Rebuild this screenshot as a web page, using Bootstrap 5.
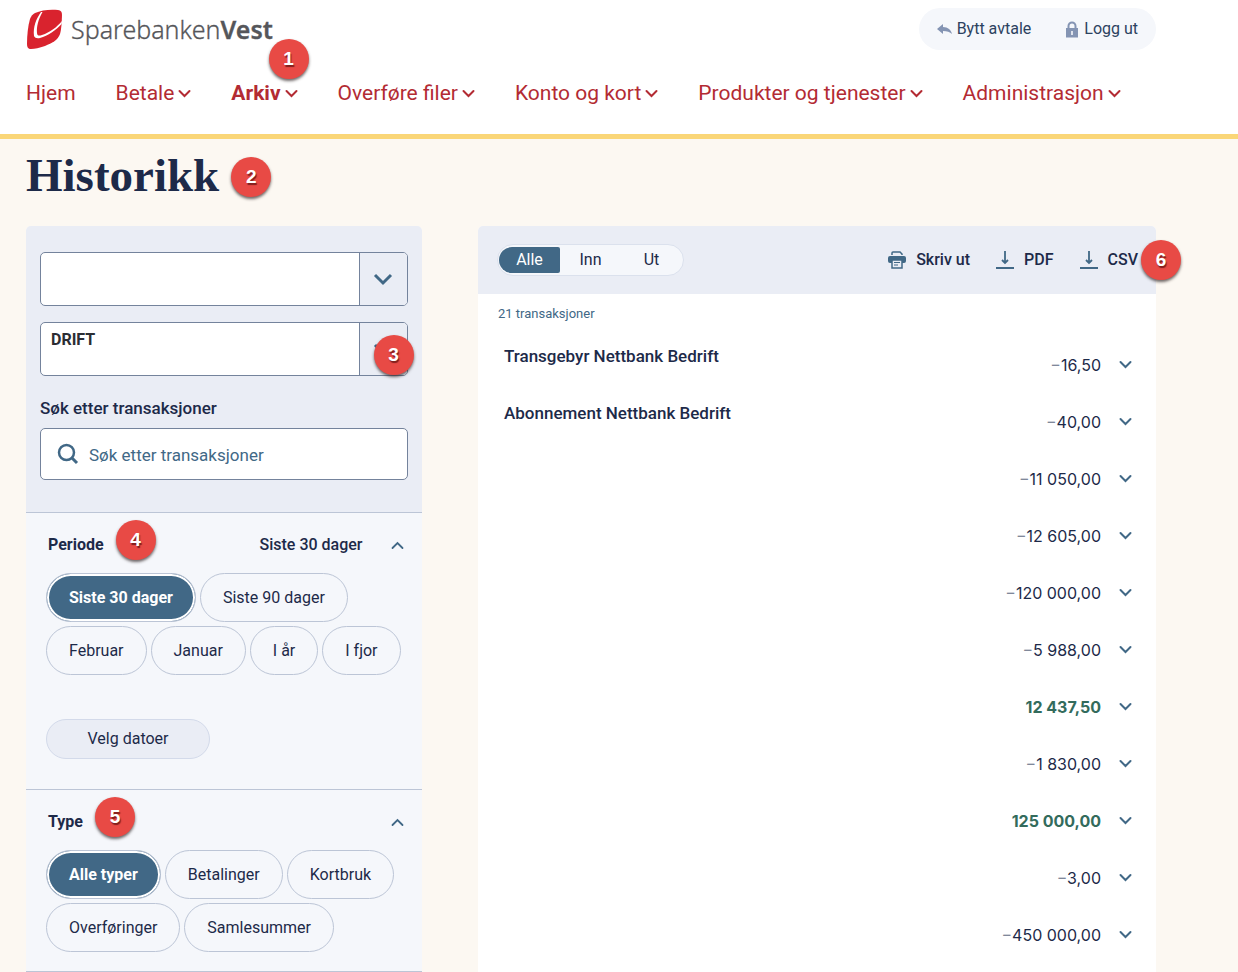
<!DOCTYPE html>
<html lang="no">
<head>
<meta charset="utf-8">
<meta name="viewport" content="width=device-width, initial-scale=1">
<title>Historikk – Sparebanken Vest</title>
<link rel="stylesheet" href="https://cdn.jsdelivr.net/npm/bootstrap@5.3.0/dist/css/bootstrap.min.css">
<style>
  :root { --ink:#1d2a49; --steel:#416886; --red:#b32b33; --pale:#eaedf5; --mist:#f5f7fb; --line:#bcc5d6; }
  body { font-family:Roboto,"Liberation Sans",sans-serif; font-size:16px; line-height:24px; color:var(--ink); background:#fcf8f2; }
  svg { display:block; flex:none; fill:none; stroke:currentColor; }
  svg.solid { stroke:none; }
  .page-wrap { padding-left:26px; padding-right:82px; }
  .site-header { border-bottom:5px solid #fad678; }
  .header-top { padding-top:8px; }
  .brand-text { font-family:"Noto Sans",sans-serif; font-size:25px; font-weight:300; line-height:32px; color:#55565a; -webkit-text-stroke:.3px #55565a; }
  .brand-text b { font-weight:600; }
  .user-links { height:42px; background:var(--mist); padding:0 18px; gap:34px; }
  .user-links a { color:#2c4260; gap:5px; }
  .user-links svg { color:#8494b3; }
  .main-nav { gap:40px; padding:28px 0 26px; font-size:21px; line-height:30px; }
  .main-nav a { color:var(--red); gap:4px; white-space:nowrap; }
  .main-nav .active { font-weight:700; }
  .step { position:absolute; width:40px; height:40px; border-radius:50%; background:#e84a45; color:#fff; z-index:2;
    font:700 19px/40px "Liberation Sans",sans-serif; text-align:center; text-shadow:1px 2px 1px rgba(60,0,0,.6); box-shadow:0 2px 3px rgba(50,40,40,.7); }
  .step-nav { right:-11px; top:-39px; }
  .step-title { left:calc(100% + 12px); top:10px; }
  .step-select { right:-6px; top:13px; }
  .step-head { left:calc(100% + 12px); top:-13px; }
  .step-export { left:calc(100% + 3px); top:-8px; }
  h1 { font:700 47px/56px "Liberation Serif",serif; margin:8px 0 23px; }
  .filters { width:35%; background:var(--mist); border-radius:5px 5px 0 0; }
  .results { width:60%; background:#fff; border-radius:5px 5px 0 0; }
  .filter-top { background:var(--pale); padding:26px 14px 32px; border-radius:5px 5px 0 0; }
  .pick { margin-bottom:16px; }
  .pick .form-select { height:54px; padding:5px 58px 23px 10px; border:1px solid #74839c; border-radius:5px; background-image:none; font-weight:700; font-size:16px; line-height:24px; color:#2b2d33; }
  .pick-arrow { position:absolute; right:1px; top:1px; bottom:1px; width:48px; background:var(--pale); border-left:1px solid #74839c; border-radius:0 4px 4px 0; color:var(--steel); pointer-events:none; display:grid; place-items:center; }
  .search-label { font-size:17px; font-weight:500; padding-top:4px; margin-bottom:8px; }
  .search-box { height:52px; border:1px solid #74839c; border-radius:5px; background:#fff; padding:0 16px; gap:10px; color:var(--steel); }
  .search-box input { min-width:0; font-size:17px; padding:2px 0 0; color:var(--steel); outline:0; }
  .search-box input::placeholder { color:var(--steel); opacity:1; }
  .filter-group { border-top:1px solid var(--line); padding:20px 16px 0 20px; }
  .filter-group:last-child { border-bottom:1px solid var(--line); padding-bottom:19px; }
  .group-head { padding:0 2px; margin-bottom:16px; font-weight:500; }
  .group-head h2 { font-size:16px; line-height:24px; font-weight:700; }
  .group-head .period { margin-right:28px; }
  .toggle { color:var(--steel); background:none; border:0; padding:0; }
  .chips { gap:4px; }
  .chip { height:49px; border:1px solid var(--line); border-radius:25px; background:var(--mist); color:var(--ink); padding:0 22px; }
  .chip.on { background:var(--steel); color:#fff; font-weight:700; box-shadow:inset 0 0 0 2px #fff; }
  .date-btn { height:40px; width:164px; border:1px solid #d3daea; border-radius:20px; background:var(--pale); color:var(--ink); margin:44px 0 30px; }
  .results-top { background:var(--pale); height:68px; padding:0 18px 0 19px; border-radius:5px 5px 0 0; }
  .segments { background:var(--mist); border:1px solid #dbe1ed; border-radius:16px; padding:2px 1px; }
  .segments button { border:0; background:none; height:26px; width:61px; line-height:26px; padding:0; color:var(--ink); }
  .segments button.on { background:var(--steel); color:#fff; border-radius:13px 2px 2px 13px; }
  .exports { gap:26px; font-weight:500; }
  .exports button { color:var(--ink); font-weight:500; gap:10px; background:none; border:0; padding:0; }
  .exports svg { color:var(--steel); }
  .count { font-size:13px; line-height:20px; color:var(--steel); margin:10px 20px 13px; }
  .tx { margin:0; color:var(--ink); }
  .tx tr { height:57px; }
  .tx td { padding:7px 0 0; }
  .tx .tx-name { font-size:17px; font-weight:500; padding-left:26px; }
  .tx .tx-sum { font-family:Inter,sans-serif; text-align:right; vertical-align:middle; padding:0 18px 2px 0; white-space:nowrap; }
  .tx .tx-open { width:37px; vertical-align:middle; padding:0; }
  .tx i { font-style:normal; color:#80889a; }
  .tx .plus { color:#336b5c; font-weight:700; }
</style>
</head>
<body class="d-flex flex-column min-vh-100">
<svg width="0" height="0" class="position-absolute" aria-hidden="true">
  <symbol id="down" viewBox="0 0 13 13"><path d="M1.500 4l5 5 5-5" stroke-width="2" stroke-linecap="round"/></symbol>
  <symbol id="up" viewBox="0 0 13 13"><path d="M1.500 9l5-5 5 5" stroke-width="1.800" stroke-linecap="round"/></symbol>
  <symbol id="load" viewBox="0 0 18 18"><path d="M9 0v12M6 9l3 3 3-3" stroke-width="1.800"/><path d="M0 17h18" stroke-width="2"/></symbol>
</svg>
<header class="site-header bg-white">
  <div class="page-wrap">
    <div class="header-top d-flex justify-content-between align-items-start">
      <a href="#" class="d-flex align-items-center text-decoration-none">
        <svg class="solid" width="37" height="42" viewBox="0 0 37 42"><path d="M9 5C15 2 25 1 32 2c3 .5 4 2 4 5-.2 6-.5 14-2 19-2 6-8 9-15 12-6 2-10 3-14 3-3 0-4-2-4-5C1 27 2 18 4 11c1-3 3-5 5-6Z" fill="#d9232e"/><path d="M15 4h1.500C12 12 10.500 19 11 25c.3 3 2 3 5 2 8-2.500 15-8 20-14l-.4 3C30 22 22 28 14 30c-3 .7-5 0-6-2C7 19 10 11 15 4Z" fill="#fff"/></svg>
        <span class="brand-text ms-2">Sparebanken<b>Vest</b></span>
      </a>
      <div class="user-links d-flex align-items-center rounded-pill">
        <a href="#" class="d-flex align-items-center text-decoration-none"><svg class="solid" width="15" height="11" viewBox="0 0 15 11"><path d="M6 0v3c5 0 8 3 9 7-2-2-5-3-9-3v3L0 5Z" fill="currentColor"/></svg>Bytt avtale</a>
        <a href="#" class="d-flex align-items-center text-decoration-none"><svg class="solid" width="14" height="17" viewBox="0 0 14 17"><path d="M3.500 8V5a3.500 3.500 0 0 1 7 0v3" stroke="currentColor" stroke-width="2"/><path d="M1 7h12v9.500H1zM6.200 10v4h1.600v-4z" fill="currentColor" fill-rule="evenodd"/></svg>Logg ut</a>
      </div>
    </div>
    <nav class="main-nav d-flex">
      <a href="#" class="text-decoration-none">Hjem</a>
      <a href="#" class="d-flex align-items-center text-decoration-none">Betale<svg width="13" height="13"><use href="#down"/></svg></a>
      <a href="#" class="active d-flex align-items-center text-decoration-none position-relative">Arkiv<svg width="13" height="13"><use href="#down"/></svg><span class="step step-nav">1</span></a>
      <a href="#" class="d-flex align-items-center text-decoration-none">Overføre filer<svg width="13" height="13"><use href="#down"/></svg></a>
      <a href="#" class="d-flex align-items-center text-decoration-none">Konto og kort<svg width="13" height="13"><use href="#down"/></svg></a>
      <a href="#" class="d-flex align-items-center text-decoration-none">Produkter og tjenester<svg width="13" height="13"><use href="#down"/></svg></a>
      <a href="#" class="d-flex align-items-center text-decoration-none">Administrasjon<svg width="13" height="13"><use href="#down"/></svg></a>
    </nav>
  </div>
</header>
<main class="page-wrap d-flex flex-column flex-grow-1">
  <div class="d-flex"><h1 class="position-relative">Historikk<span class="step step-title">2</span></h1></div>
  <div class="d-flex justify-content-between flex-grow-1">
    <aside class="filters">
      <div class="filter-top">
        <div class="pick position-relative">
          <select class="form-select" aria-label="Avtale"><option></option></select>
          <span class="pick-arrow"><svg width="20" height="20" viewBox="0 0 20 20"><path d="M2 6l8 8 8-8" stroke-width="3"/></svg></span>
        </div>
        <div class="pick position-relative">
          <select class="form-select" aria-label="Konto"><option>DRIFT</option></select>
          <span class="pick-arrow"><svg width="20" height="20" viewBox="0 0 20 20"><path d="M2 6l8 8 8-8" stroke-width="3"/></svg></span>
          <span class="step step-select">3</span>
        </div>
        <label class="search-label d-block" for="search">Søk etter transaksjoner</label>
        <div class="search-box d-flex align-items-center">
          <svg width="22" height="22" viewBox="0 0 22 22"><circle cx="9.500" cy="9.500" r="7.500" stroke-width="2.500"/><path d="M15 15l5 5" stroke-width="3"/></svg>
          <input id="search" type="search" class="flex-grow-1 border-0 bg-transparent" placeholder="Søk etter transaksjoner">
        </div>
      </div>
      <section class="filter-group">
        <div class="group-head d-flex align-items-center">
          <h2 class="m-0 position-relative">Periode<span class="step step-head">4</span></h2>
          <span class="period ms-auto">Siste 30 dager</span>
          <button class="toggle" aria-label="Skjul periode"><svg width="13" height="13"><use href="#up"/></svg></button>
        </div>
        <div class="chips d-flex flex-wrap">
          <button class="chip on">Siste 30 dager</button><button class="chip">Siste 90 dager</button>
          <button class="chip">Februar</button><button class="chip">Januar</button><button class="chip">I år</button><button class="chip">I fjor</button>
        </div>
        <button class="date-btn">Velg datoer</button>
      </section>
      <section class="filter-group">
        <div class="group-head d-flex align-items-center">
          <h2 class="m-0 position-relative">Type<span class="step step-head">5</span></h2>
          <button class="toggle ms-auto" aria-label="Skjul type"><svg width="13" height="13"><use href="#up"/></svg></button>
        </div>
        <div class="chips d-flex flex-wrap">
          <button class="chip on">Alle typer</button><button class="chip">Betalinger</button><button class="chip">Kortbruk</button>
          <button class="chip">Overføringer</button><button class="chip">Samlesummer</button>
        </div>
      </section>
    </aside>
    <section class="results">
      <div class="results-top d-flex justify-content-between align-items-center">
        <div class="segments d-flex"><button class="on">Alle</button><button>Inn</button><button>Ut</button></div>
        <div class="exports d-flex position-relative">
          <button class="d-flex align-items-center"><svg class="solid" width="18" height="18" viewBox="0 0 18 18"><path d="M4 4V2q0-1 1-1h7l2 2v1" stroke="currentColor" stroke-width="1.500"/><path d="M2 5h14q2 0 2 2v3q0 2-2 2H2q-2 0-2-2V7q0-2 2-2Z" fill="currentColor"/><path d="M4 9h10v8H4Z" fill="#eaedf5" stroke="currentColor" stroke-width="1.500"/><path d="M6 11.500h6M6 14h4" stroke="currentColor" stroke-width="1.200"/></svg>Skriv ut</button>
          <button class="d-flex align-items-center"><svg width="18" height="18"><use href="#load"/></svg>PDF</button>
          <button class="d-flex align-items-center"><svg width="18" height="18"><use href="#load"/></svg>CSV</button>
          <span class="step step-export">6</span>
        </div>
      </div>
      <p class="count">21 transaksjoner</p>
      <table class="tx w-100"><tbody>
        <tr><td class="tx-name align-top">Transgebyr Nettbank Bedrift</td><td class="tx-sum"><i>−</i>16,50</td><td class="tx-open"><button class="toggle" aria-label="Vis detaljer"><svg width="13" height="13"><use href="#down"/></svg></button></td></tr>
        <tr><td class="tx-name align-top">Abonnement Nettbank Bedrift</td><td class="tx-sum"><i>−</i>40,00</td><td class="tx-open"><button class="toggle" aria-label="Vis detaljer"><svg width="13" height="13"><use href="#down"/></svg></button></td></tr>
        <tr><td></td><td class="tx-sum"><i>−</i>11 050,00</td><td class="tx-open"><button class="toggle" aria-label="Vis detaljer"><svg width="13" height="13"><use href="#down"/></svg></button></td></tr>
        <tr><td></td><td class="tx-sum"><i>−</i>12 605,00</td><td class="tx-open"><button class="toggle" aria-label="Vis detaljer"><svg width="13" height="13"><use href="#down"/></svg></button></td></tr>
        <tr><td></td><td class="tx-sum"><i>−</i>120 000,00</td><td class="tx-open"><button class="toggle" aria-label="Vis detaljer"><svg width="13" height="13"><use href="#down"/></svg></button></td></tr>
        <tr><td></td><td class="tx-sum"><i>−</i>5 988,00</td><td class="tx-open"><button class="toggle" aria-label="Vis detaljer"><svg width="13" height="13"><use href="#down"/></svg></button></td></tr>
        <tr><td></td><td class="tx-sum plus">12 437,50</td><td class="tx-open"><button class="toggle" aria-label="Vis detaljer"><svg width="13" height="13"><use href="#down"/></svg></button></td></tr>
        <tr><td></td><td class="tx-sum"><i>−</i>1 830,00</td><td class="tx-open"><button class="toggle" aria-label="Vis detaljer"><svg width="13" height="13"><use href="#down"/></svg></button></td></tr>
        <tr><td></td><td class="tx-sum plus">125 000,00</td><td class="tx-open"><button class="toggle" aria-label="Vis detaljer"><svg width="13" height="13"><use href="#down"/></svg></button></td></tr>
        <tr><td></td><td class="tx-sum"><i>−</i>3,00</td><td class="tx-open"><button class="toggle" aria-label="Vis detaljer"><svg width="13" height="13"><use href="#down"/></svg></button></td></tr>
        <tr><td></td><td class="tx-sum"><i>−</i>450 000,00</td><td class="tx-open"><button class="toggle" aria-label="Vis detaljer"><svg width="13" height="13"><use href="#down"/></svg></button></td></tr>
      </tbody></table>
    </section>
  </div>
</main>
<script src="https://cdn.jsdelivr.net/npm/bootstrap@5.3.0/dist/js/bootstrap.bundle.min.js"></script>
</body>
</html>
